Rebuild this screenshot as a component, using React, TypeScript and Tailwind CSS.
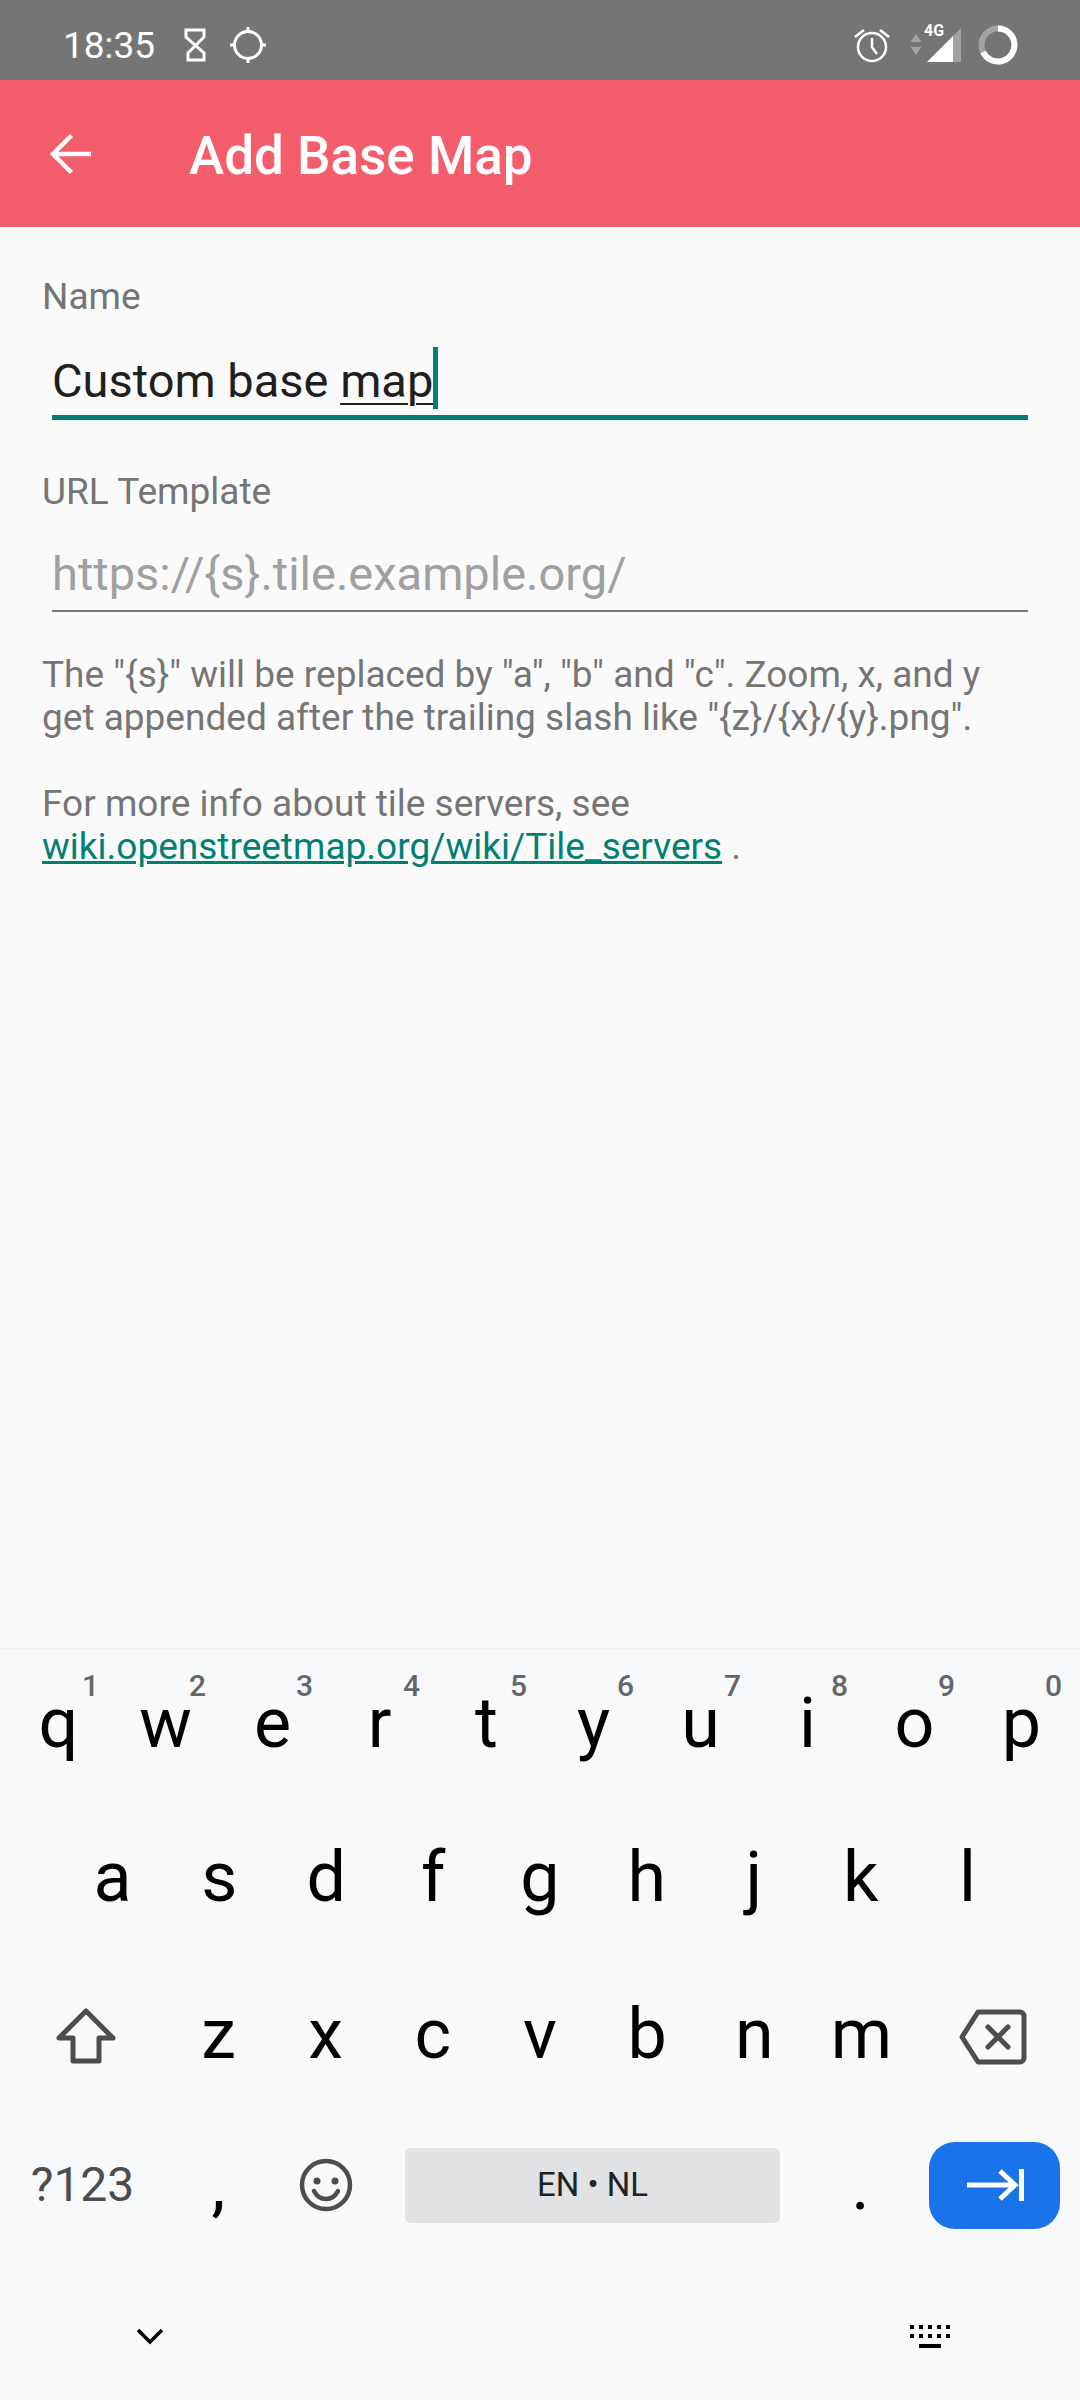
import React from "react";

const FONT = "font-['Roboto',sans-serif]";

function Hint({ n }: { n: string }) {
  return <span className="absolute right-[13px] top-[19px] text-[30px] leading-[35px] font-medium text-[#666]">{n}</span>;
}

function Key({ label, hint, lift }: { label: string; hint?: string; lift?: boolean }) {
  return (
    <div className={`relative flex h-[154px] items-center justify-center text-[70px] leading-[82px] text-black ${lift ? "pb-[6px]" : ""}`}>
      {label}
      {hint && <Hint n={hint} />}
    </div>
  );
}

function StatusBar() {
  return (
    <div className="flex h-[80px] items-center bg-[#757575] pl-[63px] pr-[62px] pt-[10px] text-white">
      <span className="text-[37px] leading-[43px]">18:35</span>
      <svg className="ml-[29px]" width="22" height="34" viewBox="0 0 22 34" fill="none" stroke="#fff" strokeWidth="3">
        <path d="M2 2h18v7L4 25v7h16v-7L2 9z" />
      </svg>
      <svg className="ml-[23px]" width="38" height="38" viewBox="0 0 38 38" fill="none" stroke="#fff" strokeWidth="3">
        <circle cx="19" cy="19" r="13.5" />
        <path d="M19 1v5M19 32v5M1 19h5M32 19h5" />
      </svg>
      <div className="ml-auto flex items-center">
        <svg className="mr-[3px]" width="38" height="36" viewBox="0 0 38 36" fill="none" stroke="#fff" strokeWidth="2.5">
          <circle cx="19" cy="20" r="14" />
          <path d="M19 11v9l5 7M2 10 11 3M36 10l-9-7" />
        </svg>
        <svg className="ml-[16px]" width="12" height="24" viewBox="0 0 12 24" fill="#a3a3a3">
          <path d="M6 1l5.500 8H.5zM.5 14h11L6 22z" />
        </svg>
        <div className="relative ml-[5px] h-[38px] w-[36px]">
          <svg className="absolute left-0 top-0" width="36" height="38" viewBox="0 0 36 38">
            <path d="M26 10 34 2v34h-8z" fill="#a3a3a3" />
            <path d="M0 36 26 10v26z" fill="#fff" />
          </svg>
          <span className="absolute left-[-3px] top-[-4px] text-[16px] leading-[18px] font-bold">4G</span>
        </div>
        <svg className="ml-[15px]" width="40" height="40" viewBox="0 0 40 40" fill="none" strokeWidth="6">
          <circle cx="20" cy="20" r="16.500" stroke="#a3a3a3" />
          <path d="M20 3.500A16.500 16.500 0 1 1 5 27" stroke="#fff" />
        </svg>
      </div>
    </div>
  );
}

function AppBar() {
  return (
    <div className="flex h-[147px] items-center bg-[#f45d6b] pl-[50px] text-white">
      <svg width="41" height="42" viewBox="0 0 42 42" fill="none" stroke="#fff" strokeWidth="4.500">
        <path d="M42 21H3M22 2 3 21l19 19" />
      </svg>
      <span className="ml-[98px] mt-[4px] text-[53px] leading-[60px] font-medium">Add Base Map</span>
    </div>
  );
}

function Form() {
  return (
    <div className="flex-1 bg-[#fafafa] pl-[42px] pr-[52px] pt-[50px]">
      <div className="text-[37px] leading-[40px] text-[#757575]">Name</div>
      <div className="ml-[10px] mt-[30px] h-[73px] whitespace-nowrap border-b-[5px] border-[#008073] text-[47px] leading-[54px] text-[#1f1f1f]">
        Custom base <span className="underline decoration-2 underline-offset-[6px]">map</span>
        <span className="inline-block h-[62px] w-[5px] bg-[#008073] align-[-12px]" />
      </div>
      <div className="mt-[52px] text-[37px] leading-[40px] text-[#757575]">URL Template</div>
      <div className="ml-[10px] mt-[35px] h-[65px] whitespace-nowrap border-b-2 border-[#777] text-[47px] leading-[54px] text-[#a0a0a0]">
        {"https://{s}.tile.example.org/"}
      </div>
      <p className="mt-[41px] whitespace-nowrap text-[37px] leading-[43px] text-[#757575]">
        The "{"{s}"}" will be replaced by "a", "b" and "c". Zoom, x, and y
        <br />
        get appended after the trailing slash like "{"{z}/{x}/{y}"}.png".
      </p>
      <p className="mt-[43px] whitespace-nowrap text-[37px] leading-[43px] text-[#757575]">
        For more info about tile servers, see
        <br />
        <span className="text-[#008073] underline">wiki.openstreetmap.org/wiki/Tile_servers</span> .
      </p>
    </div>
  );
}

function Keyboard() {
  const top = ["q", "w", "e", "r", "t", "y", "u", "i", "o", "p"];
  const hints = ["1", "2", "3", "4", "5", "6", "7", "8", "9", "0"];
  const mid = ["a", "s", "d", "f", "g", "h", "j", "k", "l"];
  const low = ["z", "x", "c", "v", "b", "n", "m"];
  return (
    <div className="h-[752px] border-t border-[#f0f0f0] bg-[#f8f9fb]">
      <div className="grid grid-cols-10 px-[5px]">
        {top.map((k, i) => (
          <Key key={k} label={k} hint={hints[i]} lift />
        ))}
      </div>
      <div className="grid grid-cols-9 px-[59px]">
        {mid.map((k) => (
          <Key key={k} label={k} lift />
        ))}
      </div>
      <div className="flex">
        <div className="flex w-[165px] items-center justify-center pl-[6px] pt-[6px]">
          <svg width="62" height="60" viewBox="0 0 62 60" fill="none" stroke="#4d4d4d" strokeWidth="5" strokeLinejoin="round">
            <path d="M31 4 4 31h14v23h26V31h14z" />
          </svg>
        </div>
        <div className="grid flex-1 grid-cols-7">
          {low.map((k) => (
            <Key key={k} label={k} />
          ))}
        </div>
        <div className="flex w-[165px] items-center justify-center pr-[10px] pt-[6px]">
          <svg width="68" height="56" viewBox="0 0 68 56" fill="none" stroke="#4d4d4d" strokeWidth="5" strokeLinejoin="round" strokeLinecap="round">
            <path d="M3 28 19 3h42a4 4 0 0 1 4 4v42a4 4 0 0 1-4 4H19z" />
            <path d="M29 18l20 20M49 18 29 38" />
          </svg>
        </div>
      </div>
      <div className="flex h-[154px] items-center pb-[6px]">
        <div className="w-[165px] text-center text-[48px] leading-[56px] text-[#4d4d4d]">?123</div>
        <div className="w-[107px] text-center text-[70px] leading-[82px] text-black">,</div>
        <div className="flex w-[107px] justify-center">
          <svg width="56" height="56" viewBox="0 0 56 56" fill="none" stroke="#4d4d4d" strokeWidth="4.500">
            <circle cx="28" cy="28" r="24" />
            <circle cx="19" cy="24" r="3.500" fill="#4d4d4d" stroke="none" />
            <circle cx="37" cy="24" r="3.500" fill="#4d4d4d" stroke="none" />
            <path d="M16 34c3 6 7.500 8 12 8s9-2 12-8" strokeLinecap="round" />
          </svg>
        </div>
        <div className="ml-[26px] flex h-[75px] w-[375px] items-center justify-center rounded-[6px] bg-[#e1e2e3] text-[33px] leading-[38px] text-[#222]">
          EN • NL
        </div>
        <div className="w-[149px] pl-[12px] text-center text-[70px] leading-[82px] text-black">.</div>
        <div className="flex h-[87px] w-[131px] items-center justify-center rounded-[26px] bg-[#1a73e8]">
          <svg width="58" height="34" viewBox="0 0 58 34" fill="none" stroke="#fff" strokeWidth="5">
            <path d="M1 17h48M34 3l15 14-15 14M55.500 1v32" />
          </svg>
        </div>
      </div>
      <div className="flex h-[135px] items-center pt-[9px]">
        <div className="flex w-[300px] justify-center">
          <svg width="28" height="18" viewBox="0 0 28 18" fill="none" stroke="#000" strokeWidth="3.500">
            <path d="M2 2l12 12L26 2" />
          </svg>
        </div>
        <div className="ml-[571px] flex w-[120px] justify-center">
          <svg width="42" height="24" viewBox="0 0 42 24" fill="#000">
            <path d="M0 0h4v4H0zM9 0h4v4H9zM18 0h4v4h-4zM27 0h4v4h-4zM36 0h4v4h-4zM0 9h4v4H0zM9 9h4v4H9zM18 9h4v4h-4zM27 9h4v4h-4zM36 9h4v4h-4zM9 19h22v4H9z" />
          </svg>
        </div>
      </div>
    </div>
  );
}

export default function App() {
  return (
    <div className={`flex h-[2400px] w-[1080px] flex-col overflow-hidden ${FONT}`}>
      <StatusBar />
      <AppBar />
      <Form />
      <Keyboard />
    </div>
  );
}
